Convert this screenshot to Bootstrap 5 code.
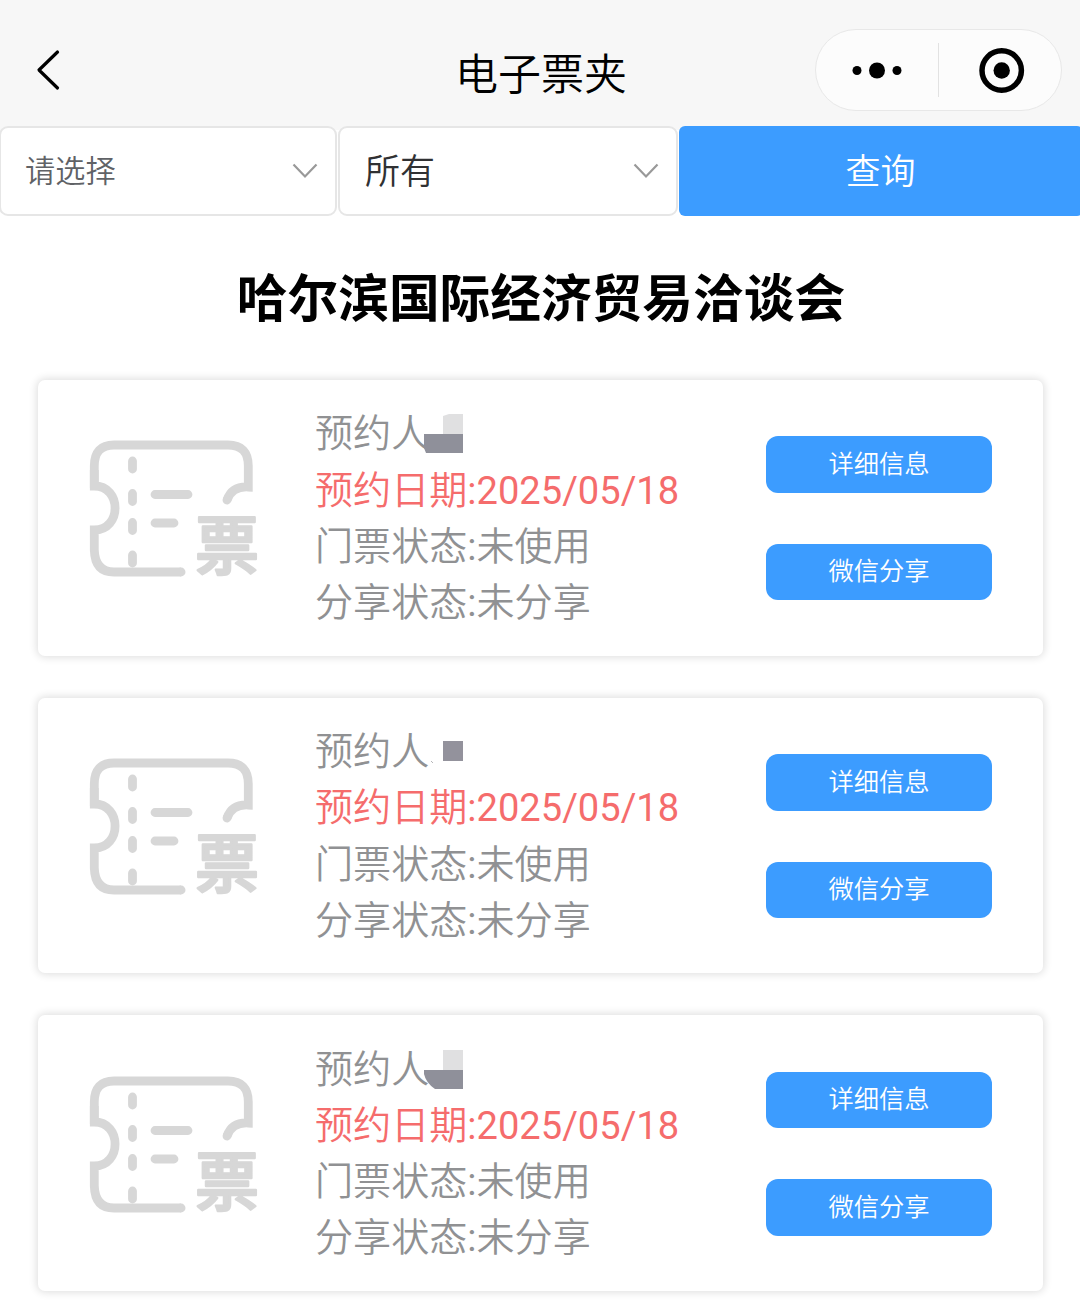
<!DOCTYPE html>
<html lang="zh-CN">
<head>
    <meta charset="UTF-8">
    <meta name="viewport" content="width=device-width, initial-scale=1.0">
    <title>电子票夹</title>
    <link href="https://cdn.jsdelivr.net/npm/bootstrap@5.3.3/dist/css/bootstrap.min.css" rel="stylesheet">
    <script src="https://cdn.jsdelivr.net/npm/bootstrap@5.3.3/dist/js/bootstrap.bundle.min.js"></script>
    <style>
        body {
            font-family: Roboto, "Noto Sans CJK SC", sans-serif;
            font-weight: 350;
            height: 1305px;
            overflow: hidden;
            background: #fff;
        }
        .top-area {
            background: linear-gradient(#f7f7f7 130px, #fff 130px);
        }
        .top-bar {
            display: grid;
            grid-template-columns: 265px 1fr 265px;
            height: 126px;
            padding-top: 14px;
        }
        .back-icon {
            margin-left: 35px;
        }
        .page-name {
            font-size: 43px;
            line-height: 60px;
            color: #000;
            padding-top: 10px;
            padding-left: 2px;
        }
        .capsule {
            width: 247px;
            height: 82px;
            margin-right: 18px;
            border: 1px solid #e8e8e8;
            border-radius: 41px;
            background: #fcfcfc;
        }
        .capsule-line {
            width: 1px;
            height: 54px;
            background: #e2e2e2;
        }
        .filter-bar {
            display: grid;
            grid-template-columns: 338px 340px 404px;
            column-gap: 1px;
            height: 90px;
            margin-left: -1px;
            margin-right: -3px;
        }
        .select-box {
            border: 2px solid #e6e6e6;
            border-radius: 9px;
            background: #fff;
            padding: 0 16px 0 25px;
            color: #303133;
            font-size: 35px;
        }
        .select-box span {
            padding-top: 5px;
        }
        .select-empty {
            color: #606266;
            font-size: 30.2px;
            padding-left: 24px;
        }
        .select-empty span {
            padding-top: 2px;
        }
        .btn-main, .btn-main:hover {
            background: #3c9cff;
            color: #fff;
            border: 0;
            font-weight: 350;
        }
        .btn-query {
            border-radius: 6px;
            font-size: 35px;
            padding: 4px 1px 0 0;
        }
        .fair-name {
            font-size: 50.7px;
            line-height: 70px;
            margin: 49px 0 45px;
            padding-left: 2px;
            color: #000;
        }
        .ticket-list {
            padding: 0 37px 0 37.5px;
            gap: 42px;
        }
        .ticket {
            height: 275.7px;
            flex: none;
            border-radius: 7px;
            background: #fff;
            box-shadow: 0 0 8px 1px rgba(0, 0, 0, .14);
            padding: 0 51px 0 50px;
        }
        .ticket-icon {
            margin-bottom: 17px;
        }
        .ticket-info {
            margin-left: 53.5px;
            padding-top: 2px;
            font-size: 38.1px;
            line-height: 56.2px;
            color: #909193;
            white-space: nowrap;
        }
        .ticket-date {
            color: #f56c6c;
        }
        .ticket-info span {
            font-weight: 400;
        }
        .mosaic {
            display: inline-block;
            vertical-align: -6px;
            margin-left: -5px;
        }
        .ticket-btns {
            width: 226px;
            gap: 51px;
            padding-top: 1px;
        }
        .ticket-btns .btn {
            height: 56.5px;
            border-radius: 12px;
            font-size: 25.3px;
            line-height: 1;
            padding: 0;
        }
    </style>
</head>
<body>

    <svg width="0" height="0" class="d-none">
        <symbol id="ticket-icon" viewBox="0 0 174 142">
            <g fill="none" stroke="#d7d7d7" stroke-width="8.8">
                <path d="M6.300 32V48C34 48 34 92 6.300 92M6.300 87.500V112Q7 134 26 134H93"/>
                <path d="M6.300 50V28Q6.300 7 26 7H140Q160.300 7 160.300 28V49Q144 48 139 62"/>
                <g stroke-linecap="round">
                    <path d="M93 134h.1M139 62l.1-.2"/>
                    <path d="M44.500 23v8M44.500 55.500v8M44.500 84.500v8M44.500 117v8"/>
                    <path d="M67 56.500h33M67 85h19"/>
                </g>
            </g>
            <text x="107" y="130.500" font-family="Noto Sans CJK SC" font-size="64" font-weight="500" fill="#d7d7d7" stroke="#d7d7d7" stroke-width="2.400" stroke-linejoin="round">票</text>
        </symbol>
        <symbol id="arrow-down" viewBox="0 0 28 18">
            <path d="M2.500 2.500L14 14.500L25.500 2.500" fill="none" stroke="#999" stroke-width="2.200"/>
        </symbol>
    </svg>

    <div class="top-area">
        <!-- 导航栏 -->
        <header class="top-bar align-items-center">
            <svg class="back-icon" width="28" height="44" viewBox="0 0 28 44">
                <path d="M22.500 4L4 22L22.500 40" fill="none" stroke="#000" stroke-width="3.200" stroke-linecap="round" stroke-linejoin="round"/>
            </svg>
            <div class="page-name text-center">电子票夹</div>
            <div class="capsule d-flex align-items-center">
                <svg width="122" height="60" viewBox="0 0 122 60">
                    <circle cx="41" cy="30.500" r="4.500"/>
                    <circle cx="61" cy="30.500" r="8"/>
                    <circle cx="81" cy="30.500" r="4.500"/>
                </svg>
                <div class="capsule-line"></div>
                <svg width="122" height="60" viewBox="0 0 122 60">
                    <circle cx="62.700" cy="30.500" r="19.700" fill="none" stroke="#000" stroke-width="5.500"/>
                    <circle cx="62.700" cy="30.500" r="8.200"/>
                </svg>
            </div>
        </header>

        <!-- 筛选 -->
        <div class="filter-bar">
            <div class="select-box select-empty d-flex align-items-center justify-content-between">
                <span>请选择</span>
                <svg width="28" height="18"><use href="#arrow-down"/></svg>
            </div>
            <div class="select-box d-flex align-items-center justify-content-between">
                <span>所有</span>
                <svg width="28" height="18"><use href="#arrow-down"/></svg>
            </div>
            <button class="btn btn-main btn-query">查询</button>
        </div>
    </div>

    <h1 class="fair-name text-center fw-bold">哈尔滨国际经济贸易洽谈会</h1>

    <!-- 票列表 -->
    <main class="ticket-list d-flex flex-column">
        <div class="ticket d-flex align-items-center">
            <svg class="ticket-icon" width="174" height="142"><use href="#ticket-icon"/></svg>
            <div class="ticket-info">
                <div>预约人<svg class="mosaic" width="39" height="39"><path d="M19 2L25 0H39V20H19z" fill="#e0e0e1"/><path d="M0 20H39V39H2L0 34z" fill="#8f909a"/></svg></div>
                <div class="ticket-date">预约日期<span>:2025/05/18</span></div>
                <div>门票状态<span>:</span>未使用</div>
                <div>分享状态<span>:</span>未分享</div>
            </div>
            <div class="ticket-btns d-flex flex-column ms-auto">
                <button class="btn btn-main">详细信息</button>
                <button class="btn btn-main">微信分享</button>
            </div>
        </div>

        <div class="ticket d-flex align-items-center">
            <svg class="ticket-icon" width="174" height="142"><use href="#ticket-icon"/></svg>
            <div class="ticket-info">
                <div>预约人<svg class="mosaic" width="39" height="39"><path d="M19 9H39V29H19z" fill="#93929c"/><path d="M7 29l2 2" stroke="#b5b5b8"/></svg></div>
                <div class="ticket-date">预约日期<span>:2025/05/18</span></div>
                <div>门票状态<span>:</span>未使用</div>
                <div>分享状态<span>:</span>未分享</div>
            </div>
            <div class="ticket-btns d-flex flex-column ms-auto">
                <button class="btn btn-main">详细信息</button>
                <button class="btn btn-main">微信分享</button>
            </div>
        </div>

        <div class="ticket d-flex align-items-center">
            <svg class="ticket-icon" width="174" height="142"><use href="#ticket-icon"/></svg>
            <div class="ticket-info">
                <div>预约人<svg class="mosaic" width="39" height="39"><path d="M19 0H39V20H19z" fill="#e0e0e1"/><path d="M0 20H39V39H11Q2 33 0 24z" fill="#8f909a"/></svg></div>
                <div class="ticket-date">预约日期<span>:2025/05/18</span></div>
                <div>门票状态<span>:</span>未使用</div>
                <div>分享状态<span>:</span>未分享</div>
            </div>
            <div class="ticket-btns d-flex flex-column ms-auto">
                <button class="btn btn-main">详细信息</button>
                <button class="btn btn-main">微信分享</button>
            </div>
        </div>
    </main>

</body>
</html>
